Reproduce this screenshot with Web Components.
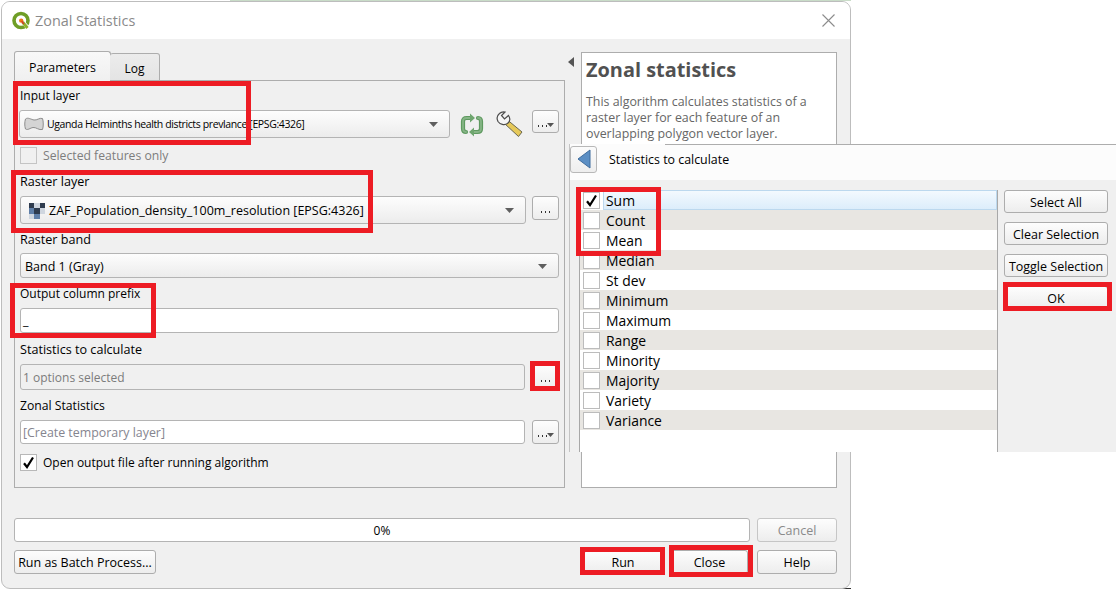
<!DOCTYPE html>
<html>
<head>
<meta charset="utf-8">
<title>Zonal Statistics</title>
<style>
html, body { margin: 0; padding: 0; background: #fff; overflow: hidden; }
body { font-family: "Open Sans", "Noto Sans", sans-serif; font-size: 12px; color: #000; }
</style>
</head>
<body>
<zonal-dialog></zonal-dialog>
<script>
class QgsButton extends HTMLElement {
    constructor() {
        super();
        this.shadowDOM = this.attachShadow({mode: "open"});
        this.shadowDOM.innerHTML = `
        <style>
        :host { display: flex; align-items: center; justify-content: center; box-sizing: border-box; height: 24px; padding-top: 1px;
            border: 1px solid #adadad; border-radius: 3px; background: linear-gradient(#fdfdfd, #ededed);
            font-size: 12.5px; white-space: nowrap; flex: none; }
        :host([disabled]) { color: #8a8a8a; border-color: #c6c6c6; }
        </style>
        <slot></slot>`;
    }
}
customElements.define("qgs-button", QgsButton);

class QgsDotsButton extends HTMLElement {
    constructor() {
        super();
        this.shadowDOM = this.attachShadow({mode: "open"});
        const arrow = this.hasAttribute("menu") ? `<svg width="7" height="4" viewBox="0 0 7 4"><path d="M0 0H7L3.500 4Z" fill="#555"/></svg>` : "";
        this.shadowDOM.innerHTML = `
        <style>
        :host { display: flex; align-items: center; justify-content: center; box-sizing: border-box; flex: none;
            border: 1px solid #adadad; border-radius: 3px; background: linear-gradient(#fdfdfd, #ededed); }
        .d { width: 9px; height: 2px; margin-top: 8px; background: repeating-linear-gradient(90deg, #333 0 1px, transparent 1px 4px); }
        svg { margin-top: 6px; }
        </style>
        <div class="d"></div>${arrow}`;
    }
}
customElements.define("qgs-dots-button", QgsDotsButton);

class QgsCombo extends HTMLElement {
    constructor() {
        super();
        this.shadowDOM = this.attachShadow({mode: "open"});
        this.shadowDOM.innerHTML = `
        <style>
        :host { display: flex; align-items: center; box-sizing: border-box; border: 1px solid #b4b4b4; border-radius: 3px;
            background: linear-gradient(#fdfdfd, #ececec); padding: 0 11px 0 4px; min-width: 0; font-size: 12.5px; }
        .text { flex: 1; display: flex; align-items: center; gap: 3px; white-space: nowrap; overflow: hidden; }
        </style>
        <div class="text"><slot></slot></div>
        <svg width="9" height="5" viewBox="0 0 9 5"><path d="M0 0H9L4.500 5Z" fill="#5f5f5f"/></svg>`;
    }
}
customElements.define("qgs-combo", QgsCombo);

class QgsField extends HTMLElement {
    constructor() {
        super();
        this.shadowDOM = this.attachShadow({mode: "open"});
        this.shadowDOM.innerHTML = `
        <style>
        :host { display: flex; align-items: center; box-sizing: border-box; border: 1px solid #b4b4b4; border-radius: 3px;
            background: #fff; padding: 0 2px; white-space: nowrap; min-width: 0; }
        :host([readonly]) { background: #f0f0f0; color: #7c7c7c; }
        :host([placeholder]) { color: #85858f; font-size: 12.4px; }
        </style>
        <slot></slot>`;
    }
}
customElements.define("qgs-field", QgsField);

class QgsCheck extends HTMLElement {
    constructor() {
        super();
        this.shadowDOM = this.attachShadow({mode: "open"});
        const tick = this.hasAttribute("checked") ? `<svg width="13" height="13" viewBox="0 0 13 13"><path d="M2 7.200 5 11 11 1.500" fill="none" stroke="#000" stroke-width="2.200"/></svg>` : "";
        this.shadowDOM.innerHTML = `
        <style>
        :host { display: flex; align-items: center; gap: 6px; white-space: nowrap; }
        :host([disabled]) { color: #7d7d7d; font-size: 12.2px; }
        :host([checked]) .t { padding-top: 1px; }
        .box { box-sizing: border-box; width: 17px; height: 17px; border: 1px solid #b8b8b8; background: #fff;
            display: flex; align-items: center; justify-content: center; flex: none; }
        :host([disabled]) .box { background: #f0f0f0; border-color: #c4c4c4; }
        </style>
        <div class="box">${tick}</div><div class="t"><slot></slot></div>`;
    }
}
customElements.define("qgs-check", QgsCheck);

class QgsLabel extends HTMLElement {
    constructor() {
        super();
        this.shadowDOM = this.attachShadow({mode: "open"});
        this.shadowDOM.innerHTML = `
        <style>:host { display: block; height: 16px; line-height: 16px; white-space: nowrap; }</style>
        <slot></slot>`;
    }
}
customElements.define("qgs-label", QgsLabel);

class QgsTitlebar extends HTMLElement {
    constructor() {
        super();
        this.shadowDOM = this.attachShadow({mode: "open"});
        this.shadowDOM.innerHTML = `
        <style>
        :host { display: flex; align-items: center; height: 37px; background: #fff; flex: none; padding: 0 15px 0 9px;
            border-radius: 8px 8px 0 0; color: #8a8a8a; font-size: 14.4px; }
        .name { flex: 1; margin-left: 4px; }
        </style>
        <svg width="20" height="20" viewBox="0 0 20 20">
            <circle cx="10" cy="9.500" r="7" fill="none" stroke="#6f9e26" stroke-width="3.600"/>
            <path d="M11 10 17 17" stroke="#fff" stroke-width="4"/>
            <path d="M11.500 11 16.500 17" stroke="#8fb02a" stroke-width="3"/>
            <circle cx="10.200" cy="9.600" r="2.200" fill="#ee7913"/>
            <path d="M10.600 10.200 13 13" stroke="#d9352b" stroke-width="1.400"/>
        </svg>
        <div class="name">Zonal Statistics</div>
        <svg width="13" height="13" viewBox="0 0 13 13"><path d="M.5.5 12.500 12.500M12.500.5.5 12.500" stroke="#8c8c8c" stroke-width="1.100" fill="none"/></svg>`;
    }
}
customElements.define("qgs-titlebar", QgsTitlebar);

class QgsTabs extends HTMLElement {
    constructor() {
        super();
        this.shadowDOM = this.attachShadow({mode: "open"});
        this.shadowDOM.innerHTML = `
        <style>
        :host { display: flex; align-items: flex-end; height: 29px; flex: none; margin-bottom: -1px; position: relative; z-index: 1; }
        .tab { box-sizing: border-box; display: flex; align-items: center; justify-content: center; border: 1px solid #adadad;
            border-radius: 3px 3px 0 0; }
        .on { width: 97px; height: 30px; font-size: 12.4px; padding-top: 2px; background: linear-gradient(#f8f8f8, #f0f0f0); border-bottom-color: #f0f0f0; }
        .off { width: 50px; height: 28px; margin-left: -1px; border-left: 0; background: linear-gradient(#ececec, #e4e4e4); padding-top: 2px; }
        </style>
        <div class="tab on">Parameters</div><div class="tab off">Log</div>`;
    }
}
customElements.define("qgs-tabs", QgsTabs);

class QgsParameters extends HTMLElement {
    constructor() {
        super();
        this.shadowDOM = this.attachShadow({mode: "open"});
        this.shadowDOM.innerHTML = `
        <style>
        :host { display: flex; flex-direction: column; box-sizing: border-box; flex: 1; border: 1px solid #adadad; padding: 7px 5px 0; }
        .row { display: flex; align-items: flex-start; }
        .icon { flex: none; }
        .small { font-size: 10.5px; letter-spacing: -.38px; white-space: nowrap; }
        .wide { font-size: 12.6px; }
        </style>
        <qgs-label>Input layer</qgs-label>
        <div class="row" style="margin:6px 0 0 -1px">
            <qgs-combo style="width:431px;height:28px">
                <svg class="icon" width="20" height="14" viewBox="0 0 20 14"><path d="M1.500 2C4 0 7 2.500 10 3S15.500 .5 18.500 1.500C19.500 4 19.500 10 18.500 12.500 15 13.500 12 10 9 10.500S4 13.500 1.500 12C.5 9 .5 5 1.500 2Z" fill="#d4d4d4" stroke="#8c8c8c"/></svg>
                <span class="small">Uganda Helminths health districts prevlance [EPSG:4326]</span>
            </qgs-combo>
            <svg class="icon" style="margin:3px 0 0 9px" width="26" height="24" viewBox="0 0 26 24">
                <g fill="none" stroke-linecap="round">
                    <path d="M11 5H7.500Q4 5 4 8.500V15.500Q4 19 7 19M15 19H18.500Q22 19 22 15.500V8.500Q22 5 19 5" stroke="#5f9a60" stroke-width="4.200"/>
                    <path d="M11 5H7.500Q4 5 4 8.500V15.500Q4 19 7 19M15 19H18.500Q22 19 22 15.500V8.500Q22 5 19 5" stroke="#86b586" stroke-width="1.800"/>
                </g>
                <path d="M11 .5 16 5 11 9.500ZM15 14.500 10 19 15 23.500Z" fill="#6fa66f"/>
            </svg>
            <svg class="icon" style="margin:1px 0 0 11px" width="27" height="26" viewBox="0 0 27 26">
                <path d="M11.500 9 26 21 22.500 25.500 8.500 12.500Z" fill="#e6c95a" stroke="#6a674f"/>
                <path d="M9 1 5.500 4.500 8.500 8 12.500 4.500C14.500 7.500 14 10.500 11.500 12.500 8.500 14.500 4 13.500 2 10.500.5 7.500 1 4.500 3.500 2.500 5 1 7 .5 9 1Z" fill="#f6f6f6" stroke="#4d4d4d" stroke-width="1.200"/>
            </svg>
            <qgs-dots-button menu style="width:27px;height:23px;margin-left:9px"></qgs-dots-button>
        </div>
        <qgs-check disabled style="margin-top:9px">Selected features only</qgs-check>
        <qgs-label class="wide" style="margin-top:10px">Raster layer</qgs-label>
        <div class="row" style="margin-top:6px">
            <qgs-combo style="width:506px;height:28px;padding-left:7px">
                <svg class="icon" width="17" height="17" viewBox="0 0 16 16" shape-rendering="crispEdges">
                    <path d="M1 1H6V6H1ZM11 1H16V6H11ZM6 6H11V11H6Z" fill="#2e3b4e"/>
                    <path d="M1 6H6V11H1ZM6 11H11V16H6Z" fill="#5f7fa8"/>
                    <path d="M6 1H11V6H6ZM11 6H16V11H11ZM1 11H6V16H1Z" fill="#cfd6df"/>
                </svg>
                <span style="margin-left:1px">ZAF_Population_density_100m_resolution [EPSG:4326]</span>
            </qgs-combo>
            <qgs-dots-button style="width:27px;height:24px;margin-left:6px"></qgs-dots-button>
        </div>
        <qgs-label class="wide" style="margin-top:8px">Raster band</qgs-label>
        <qgs-combo style="height:25px;margin-top:5px;padding-top:1px">Band 1 (Gray)</qgs-combo>
        <qgs-label style="margin-top:8px">Output column prefix</qgs-label>
        <qgs-field style="height:25px;margin-top:6px;font-size:12.5px">_</qgs-field>
        <qgs-label class="wide" style="margin-top:9px">Statistics to calculate</qgs-label>
        <div class="row" style="margin-top:6px">
            <qgs-field readonly style="width:505px;height:26px">1 options selected</qgs-field>
            <qgs-dots-button style="width:25px;height:26px;margin-left:8px"></qgs-dots-button>
        </div>
        <qgs-label style="margin-top:8px;font-size:12.2px">Zonal Statistics</qgs-label>
        <div class="row" style="margin-top:6px">
            <qgs-field placeholder style="width:505px;height:24px">[Create temporary layer]</qgs-field>
            <qgs-dots-button menu style="width:27px;height:24px;margin-left:7px"></qgs-dots-button>
        </div>
        <qgs-check checked style="margin-top:9px">Open output file after running algorithm</qgs-check>`;
    }
}
customElements.define("qgs-parameters", QgsParameters);

class QgsHelp extends HTMLElement {
    constructor() {
        super();
        this.shadowDOM = this.attachShadow({mode: "open"});
        this.shadowDOM.innerHTML = `
        <style>
        :host { display: block; box-sizing: border-box; width: 256px; border: 1px solid #adadad; background: #fff; padding: 4px 4px 0; color: #666; flex: none; }
        h2 { margin: 0; font-size: 19.9px; line-height: 26px; font-weight: 700; color: #515151; white-space: nowrap; }
        p { margin: 11px 0 0; line-height: 16px; font-size: 12.4px; white-space: nowrap; }
        </style>
        <h2>Zonal statistics</h2>
        <p>This algorithm calculates statistics of a<br>raster layer for each feature of an<br>overlapping polygon vector layer.</p>`;
    }
}
customElements.define("qgs-help", QgsHelp);

class QgsProgress extends HTMLElement {
    constructor() {
        super();
        this.shadowDOM = this.attachShadow({mode: "open"});
        this.shadowDOM.innerHTML = `
        <style>
        :host { display: flex; align-items: center; justify-content: center; box-sizing: border-box; width: 736px; height: 24px;
            border: 1px solid #b4b4b4; border-radius: 3px; background: #fff; flex: none; }
        </style>
        <slot></slot>`;
    }
}
customElements.define("qgs-progress", QgsProgress);

class StatOptions extends HTMLElement {
    constructor() {
        super();
        this.shadowDOM = this.attachShadow({mode: "open"});
        this.shadowDOM.innerHTML = `
        <style>
        :host { position: absolute; left: 569px; top: 144px; width: 547px; height: 308px; display: flex; flex-direction: column;
            box-sizing: border-box; border-left: 1px solid #c4c4c4; background: #f0f0f0; }
        header { position: relative; height: 36px; flex: none; background: #fcfcfc; display: flex; align-items: center; }
        header::before { content: ""; position: absolute; left: 95px; right: 0; top: 0; height: 1px; background: #adadad; }
        .back { box-sizing: border-box; width: 27px; height: 27px; margin-top: -6px; border: 1px solid #b8b8b8; border-radius: 3px;
            background: linear-gradient(#fbfbfb, #eeeeee); display: flex; align-items: center; justify-content: center; flex: none; }
        .title { margin-left: 12px; margin-top: -6px; font-size: 12.4px; }
        .body { flex: 1; display: flex; padding: 10px 0 0 9px; min-height: 0; }
        .list { box-sizing: border-box; width: 419px; background: #fff; border-left: 1px solid #a8a8a8; border-right: 1px solid #a8a8a8; flex: none; }
        .rows { display: flex; flex-direction: column; }
        .buttons { display: flex; flex-direction: column; gap: 9px; margin-left: 6px; width: 104px; }
        .buttons qgs-button { height: 23px; }
        </style>
        <header>
            <div class="back"><svg width="14" height="20" viewBox="0 0 14 20"><path d="M13 1V19L1 10Z" fill="#5c8fc4" stroke="#3f6d9e"/></svg></div>
            <div class="title">Statistics to calculate</div>
        </header>
        <div class="body">
            <div class="list"><div class="rows">
                <stat-row checked selected>Sum</stat-row>
                <stat-row odd>Count</stat-row>
                <stat-row>Mean</stat-row>
                <stat-row odd>Median</stat-row>
                <stat-row>St dev</stat-row>
                <stat-row odd>Minimum</stat-row>
                <stat-row>Maximum</stat-row>
                <stat-row odd>Range</stat-row>
                <stat-row>Minority</stat-row>
                <stat-row odd>Majority</stat-row>
                <stat-row>Variety</stat-row>
                <stat-row odd>Variance</stat-row>
            </div></div>
            <div class="buttons">
                <qgs-button>Select All</qgs-button>
                <qgs-button>Clear Selection</qgs-button>
                <qgs-button>Toggle Selection</qgs-button>
                <qgs-button>OK</qgs-button>
            </div>
        </div>`;
    }
}
customElements.define("stat-options", StatOptions);

class StatRow extends HTMLElement {
    constructor() {
        super();
        this.shadowDOM = this.attachShadow({mode: "open"});
        const tick = this.hasAttribute("checked") ? `<svg width="13" height="13" viewBox="0 0 13 13"><path d="M2 7.200 5 11 11 1.500" fill="none" stroke="#000" stroke-width="2.200"/></svg>` : "";
        this.shadowDOM.innerHTML = `
        <style>
        :host { display: flex; align-items: center; height: 20px; padding-left: 3px; font-size: 13.9px; background: #fff; }
        :host([odd]) { background: #e8e6e2; }
        .box { box-sizing: border-box; width: 17px; height: 17px; border: 1px solid #bcbcbc; background: #fff; flex: none;
            display: flex; align-items: center; justify-content: center; }
        .text { flex: 1; height: 20px; line-height: 21px; padding-left: 3px; margin-left: 3px; box-sizing: border-box; }
        :host([selected]) .text { background: linear-gradient(#f3f9fe, #dcedfb); border: 1px solid #bcd8ee; line-height: 19px; padding-left: 2px; }
        </style>
        <div class="box">${tick}</div><div class="text"><slot></slot></div>`;
    }
}
customElements.define("stat-row", StatRow);

class RedBox extends HTMLElement {
    constructor() {
        super();
        this.shadowDOM = this.attachShadow({mode: "open"});
        this.shadowDOM.innerHTML = `
        <style>
        :host { position: absolute; box-sizing: border-box; border: 5px solid #ed1c24; pointer-events: none; display: block; }
        </style>`;
    }
    connectedCallback() {
        const [x, y, r, b] = this.getAttribute("box").split(",").map(Number);
        this.style.left = x + "px";
        this.style.top = y + "px";
        this.style.width = (r - x) + "px";
        this.style.height = (b - y) + "px";
    }
}
customElements.define("red-box", RedBox);

class ZonalDialog extends HTMLElement {
    constructor() {
        super();
        this.shadowDOM = this.attachShadow({mode: "open"});
        this.shadowDOM.innerHTML = `
        <style>
        :host { display: block; position: relative; width: 1116px; height: 589px; overflow: hidden; background: #fff; }
        .desk { width: 851px; height: 589px; box-sizing: border-box; padding: 1px 0 0 1px;
            background: linear-gradient(#c9dcc8, #c9dcc8) 230px 0 / 621px 1px no-repeat, linear-gradient(#333, #333) 30px 588px / 821px 1px no-repeat; }
        .window { box-sizing: border-box; width: 850px; height: 588px; background: #f0f0f0; border: 1px solid #bdbdbd; border-radius: 9px;
            display: flex; flex-direction: column; }
        .content { padding: 13px 13px 0 12px; display: flex; flex-direction: column; }
        .main { display: flex; height: 436px; }
        .left { width: 551px; display: flex; flex-direction: column; flex: none; }
        .split { flex: 1; padding: 2px 0 0 3px; }
        .foot { display: flex; align-items: center; margin-top: 30px; gap: 7px; }
        .foot2 { display: flex; align-items: center; margin-top: 8px; }
        </style>
        <div class="desk"><div class="window">
            <qgs-titlebar></qgs-titlebar>
            <div class="content">
                <div class="main">
                    <div class="left">
                        <qgs-tabs></qgs-tabs>
                        <qgs-parameters></qgs-parameters>
                    </div>
                    <div class="split"><svg width="6" height="10" viewBox="0 0 6 10"><path d="M6 0V10L0 5Z" fill="#555"/></svg></div>
                    <qgs-help></qgs-help>
                </div>
                <div class="foot">
                    <qgs-progress>0%</qgs-progress>
                    <qgs-button disabled style="width:80px">Cancel</qgs-button>
                </div>
                <div class="foot2">
                    <qgs-button style="width:142px">Run as Batch Process...</qgs-button>
                    <qgs-button style="width:78px;margin-left:428px">Run</qgs-button>
                    <qgs-button style="width:77px;margin-left:9px">Close</qgs-button>
                    <qgs-button style="width:80px;margin-left:9px">Help</qgs-button>
                </div>
            </div>
        </div></div>
        <stat-options></stat-options>
        <red-box box="13,81,251,145"></red-box>
        <red-box box="11,170,373,233"></red-box>
        <red-box box="10,283,156,338"></red-box>
        <red-box box="530,361,560,391"></red-box>
        <red-box box="580,547,665,575"></red-box>
        <red-box box="669,545,753,577"></red-box>
        <red-box box="576,187,661,256"></red-box>
        <red-box box="1003,282,1112,311"></red-box>`;
    }
}
customElements.define("zonal-dialog", ZonalDialog);
</script>
</body>
</html>
